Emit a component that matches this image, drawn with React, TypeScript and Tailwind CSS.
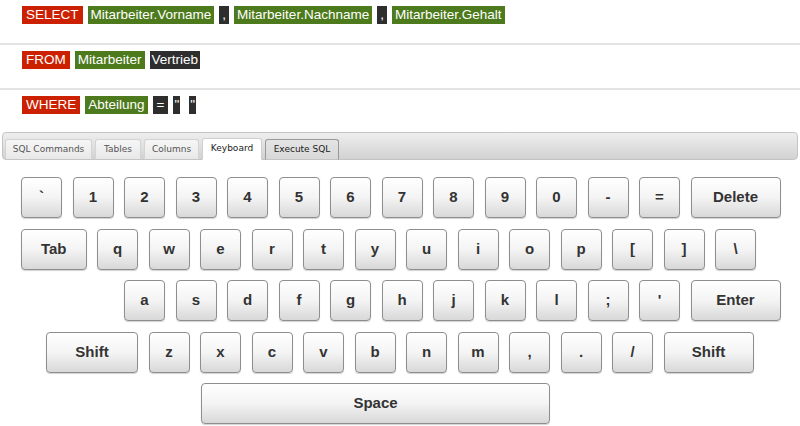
import React from "react";

type Tok = { t: string; c: "r" | "g" | "d"; px?: string; ml?: string };

const tokColor: Record<string, string> = {
  r: "bg-[#cc2100]",
  g: "bg-[#4d7a1d]",
  d: "bg-[#2e2e2e]",
};

function Token({ t, c, px, ml }: Tok) {
  return (
    <div
      className={`h-[18px] ${px ?? "px-[3px]"} ${ml ?? ""} ${tokColor[c]} text-white text-[13.5px] leading-[18px] whitespace-pre`}
    >
      {t}
    </div>
  );
}

function SqlRow({ toks, last }: { toks: Tok[]; last?: boolean }) {
  return (
    <div
      className={`${last ? "h-[42px]" : "h-[45px] border-b-2 border-[#e4e4e4]"} pl-[22px] pt-[6px] flex items-start gap-[5px]`}
    >
      {toks.map((tk, i) => (
        <Token key={i} {...tk} />
      ))}
    </div>
  );
}

function Key({ label, w }: { label: string; w?: string }) {
  return (
    <div
      className={`${w ?? "w-[41px]"} h-[41px] shrink-0 rounded-[4px] border border-[#8e8e8e] bg-gradient-to-b from-[#ffffff] via-[#f4f4f4] to-[#d8d8d8] shadow-[0_1px_1px_rgba(0,0,0,0.18)] flex items-center justify-center text-[15px] font-bold text-[#333]`}
    >
      {label}
    </div>
  );
}

function Spacer({ w }: { w: string }) {
  return <div className={`${w} h-[41px] shrink-0`} />;
}

export default function App() {
  const row1 = ["`", "1", "2", "3", "4", "5", "6", "7", "8", "9", "0", "-", "="];
  const row2 = ["q", "w", "e", "r", "t", "y", "u", "i", "o", "p", "[", "]", "\\"];
  const row3 = ["a", "s", "d", "f", "g", "h", "j", "k", "l", ";", "'"];
  const row4 = ["z", "x", "c", "v", "b", "n", "m", ",", ".", "/"];

  return (
    <div className="w-[800px] h-[426px] overflow-hidden bg-white font-['Liberation_Sans',Arial,sans-serif]">
      <SqlRow
        toks={[
          { t: "SELECT", c: "r", px: "px-[4px]" },
          { t: "Mitarbeiter.Vorname", c: "g" },
          { t: ",", c: "d", px: "px-[3px]" },
          { t: "Mitarbeiter.Nachname", c: "g" },
          { t: ",", c: "d", px: "px-[3px]" },
          { t: "Mitarbeiter.Gehalt", c: "g" },
        ]}
      />
      <SqlRow
        toks={[
          { t: "FROM", c: "r", px: "px-[4px]" },
          { t: "Mitarbeiter", c: "g" },
          { t: "Vertrieb", c: "d", px: "px-[2px]" },
        ]}
      />
      <SqlRow
        last
        toks={[
          { t: "WHERE", c: "r", px: "px-[4px]" },
          { t: "Abteilung", c: "g" },
          { t: "=", c: "d", px: "px-[4px]" },
          { t: '"', c: "d", px: "px-[1px]" },
          { t: '"', c: "d", px: "px-[1px]", ml: "ml-[4px]" },
        ]}
      />

      {/* Tab header */}
      <div className="ml-[2px] w-[796px] h-[28px] border border-[#c4c4c4] rounded-[4px] bg-gradient-to-b from-[#eeeeee] to-[#d2d2d2] flex items-end pl-[2px] gap-[3px] font-['DejaVu_Sans',Verdana,sans-serif] text-[9px]">
        <div className="w-[87px] h-[21px] mb-[-1px] border border-[#d3d3d3] border-b-[#c4c4c4] rounded-t-[3px] bg-gradient-to-b from-[#f6f6f6] to-[#e8e8e8] text-[#555] flex items-center justify-center">
          SQL Commands
        </div>
        <div className="w-[46px] h-[21px] mb-[-1px] border border-[#d3d3d3] border-b-[#c4c4c4] rounded-t-[3px] bg-gradient-to-b from-[#f6f6f6] to-[#e8e8e8] text-[#555] flex items-center justify-center">
          Tables
        </div>
        <div className="w-[55px] h-[21px] mb-[-1px] border border-[#d3d3d3] border-b-[#c4c4c4] rounded-t-[3px] bg-gradient-to-b from-[#f6f6f6] to-[#e8e8e8] text-[#555] flex items-center justify-center">
          Columns
        </div>
        <div className="w-[60px] h-[22px] mb-[-1px] border border-[#cfcfcf] border-b-white rounded-t-[3px] bg-white text-[#212121] flex items-center justify-center">
          Keyboard
        </div>
        <div className="w-[74px] h-[21px] mb-[-1px] border border-[#999999] border-b-[#c4c4c4] rounded-t-[3px] bg-gradient-to-b from-[#e4e4e4] to-[#d8d8d8] text-[#212121] flex items-center justify-center">
          Execute SQL
        </div>
      </div>

      {/* Keyboard */}
      <div className="pl-[21px] pt-[17px] flex flex-col gap-[10.5px]">
        <div className="flex gap-[10.5px]">
          {row1.map((k) => (
            <Key key={k} label={k} />
          ))}
          <Key label="Delete" w="w-[90px]" />
        </div>
        <div className="flex gap-[10.5px]">
          <Key label="Tab" w="w-[65.5px]" />
          {row2.map((k) => (
            <Key key={k} label={k} />
          ))}
        </div>
        <div className="flex gap-[10.5px]">
          <Spacer w="w-[92.5px]" />
          {row3.map((k) => (
            <Key key={k} label={k} />
          ))}
          <Key label="Enter" w="w-[90px]" />
        </div>
        <div className="flex gap-[10.5px] pl-[25px]">
          <Key label="Shift" w="w-[92px]" />
          {row4.map((k) => (
            <Key key={k} label={k} />
          ))}
          <Key label="Shift" w="w-[90px]" />
        </div>
        <div className="flex pl-[180px]">
          <Key label="Space" w="w-[349px]" />
        </div>
      </div>
    </div>
  );
}
